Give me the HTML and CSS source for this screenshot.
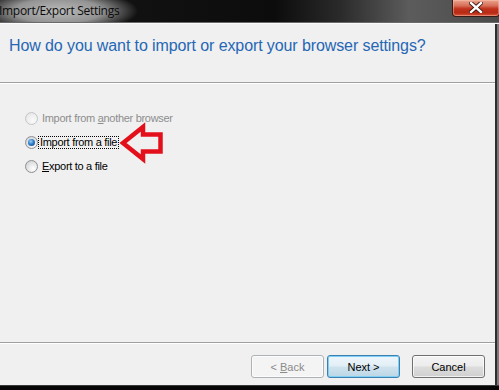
FILE: index.html
```html
<!DOCTYPE html>
<html>
<head>
<meta charset="utf-8">
<link rel="stylesheet" href="styles.css">
</head>
<body>
<div class="window">
  <div class="titlebar">
    <span class="title">Import/Export Settings</span>
    <span class="close">
      <svg width="14" height="11" viewBox="0 0 14 11">
        <path d="M2 1 L12 10 M12 1 L2 10" stroke="#3a1208" stroke-width="4.2" stroke-linecap="square"/>
        <path d="M2 1 L12 10 M12 1 L2 10" stroke="#ffffff" stroke-width="2.4" stroke-linecap="square"/>
      </svg>
    </span>
  </div>
  <div class="frame">
    <div class="main">
      <div class="header">
        <h1 class="heading">How do you want to import or export your browser settings?</h1>
      </div>
      <div class="body">
        <div class="option disabled">
          <span class="radio"></span>
          <span class="label">Import from <u>a</u>nother browser</span>
        </div>
        <div class="option">
          <span class="radio checked"></span>
          <span class="label focus">Import from a file</span>
          <svg class="arrow" width="48" height="42" viewBox="0 0 48 42">
            <path d="M5 21 L25 5 L25 12.5 L42.5 12.5 L42.5 29.5 L25 29.5 L25 37 Z" fill="none" stroke="#e3101c" stroke-width="4.5" stroke-linejoin="miter"/>
          </svg>
        </div>
        <div class="option">
          <span class="radio"></span>
          <span class="label"><u>E</u>xport to a file</span>
        </div>
      </div>
      <div class="footer">
        <button class="btn disabled">&lt; <u>B</u>ack</button>
        <button class="btn default">Next &gt;</button>
        <button class="btn cancel">Cancel</button>
      </div>
    </div>
  </div>
  <div class="bottomframe"></div>
</div>
</body>
</html>
```
FILE: styles.css
```css
html, body {
  margin: 0;
  padding: 0;
}
body {
  width: 499px;
  height: 390px;
  overflow: hidden;
  background: #f0f0f0;
  font-family: "Liberation Sans", Arial, sans-serif;
}
.window {
  display: flex;
  flex-direction: column;
  height: 390px;
}
.titlebar {
  height: 22px;
  display: flex;
  justify-content: space-between;
  align-items: flex-start;
  border-bottom: 1px solid #6a6a6a;
  box-shadow: 0 1px 0 #fbfbfb;
  margin-bottom: 1px;
  background:
    radial-gradient(ellipse 80px 22px at 58px 11px, rgba(195,195,195,0.95) 0%, rgba(165,165,165,0.88) 55%, rgba(60,60,60,0) 100%),
    linear-gradient(to right, #161616 0%, #0c0c0c 55%, #2a2a2a 68%, #5c5c5c 82%, #4a4a4a 100%);
}
.title {
  font-size: 12px;
  line-height: 12px;
  margin-top: 5px;
  margin-left: -1px;
  color: #0a0a0a;
  font-family: "Open Sans", "Liberation Sans", sans-serif;
  letter-spacing: -0.3px;
}
.close {
  width: 48px;
  height: 17px;
  margin-right: -1px;
  box-sizing: border-box;
  border: 1px solid #3a1a14;
  border-top: none;
  border-radius: 0 0 4px 4px;
  background: linear-gradient(to bottom, #e9a48f 0%, #d8705a 35%, #c0321c 55%, #b82a14 80%, #d8553a 100%);
  box-shadow: inset 0 0 0 1px rgba(255,200,180,0.45);
  display: flex;
  align-items: center;
  justify-content: center;
}
.close svg {
  display: block;
  margin-top: -1px;
}
.frame {
  flex: 1;
  display: flex;
  background: #7a7a7a;
}
.main {
  flex: 1;
  display: flex;
  flex-direction: column;
  background: #f0f0f0;
  margin-right: 2px;
  border-right: 2px solid #2e2e2e;
}
.header {
  height: 59px;
  border-bottom: 1px solid #a0a0a0;
  box-shadow: 0 1px 0 #ffffff;
  margin-bottom: 1px;
  padding-left: 9px;
  box-sizing: border-box;
}
.heading {
  margin: 0;
  padding-top: 12px;
  font-weight: normal;
  font-size: 16px;
  line-height: 20px;
  letter-spacing: -0.1px;
  color: #2567b5;
  font-family: "Liberation Sans", Arial, sans-serif;
}
.body {
  flex: 1;
  padding-top: 22px;
  padding-left: 25px;
  display: flex;
  flex-direction: column;
}
.option {
  position: relative;
  height: 24px;
  display: flex;
  align-items: center;
  gap: 2px;
  font-size: 11px;
  letter-spacing: -0.3px;
  color: #000;
}
.option.disabled {
  color: #8d8d8d;
}
.label {
  padding: 0 1px;
  line-height: 11px;
  border: 1px dotted transparent;
}
.label.focus {
  border-color: #000;
  margin-left: -2px;
  margin-right: -2px;
}
.radio {
  width: 13px;
  height: 13px;
  box-sizing: border-box;
  border-radius: 50%;
  border: 1px solid #8c8f94;
  background: radial-gradient(circle at 65% 70%, #ffffff 0%, #e8e8e8 45%, #c8cacd 100%);
  display: flex;
  align-items: center;
  justify-content: center;
}
.disabled .radio {
  border-color: #c4c6c8;
  background: radial-gradient(circle at 65% 70%, #fafafa 0%, #efefef 50%, #e0e0e0 100%);
}
.radio.checked::after {
  content: "";
  width: 7px;
  height: 7px;
  border-radius: 50%;
  background: radial-gradient(circle at 40% 35%, #9fd0f4 0%, #2f7fc8 45%, #163f7c 100%);
}
.arrow {
  position: absolute;
  left: 93px;
  top: -8px;
}
.footer {
  height: 43px;
  border-top: 1px solid #a0a0a0;
  box-shadow: inset 0 1px 0 #ffffff;
  margin-top: -2px;
  box-sizing: border-box;
  display: flex;
  justify-content: flex-end;
  align-items: flex-start;
  padding-top: 12px;
  padding-right: 10px;
  gap: 3px;
}
.btn {
  width: 73px;
  height: 23px;
  box-sizing: border-box;
  border: 1px solid #707070;
  border-radius: 3px;
  font-family: "Liberation Sans", Arial, sans-serif;
  font-size: 11px;
  color: #000;
  padding: 0;
  background: linear-gradient(to bottom, #f4f4f4 0%, #ececec 48%, #dddddd 52%, #cfcfcf 100%);
  box-shadow: inset 0 0 0 1px rgba(255,255,255,0.7);
}
.btn.disabled {
  color: #8a8a8a;
  border-color: #adb2b5;
  background: #f4f4f4;
}
.btn.default {
  border-color: #3c7fb1;
  box-shadow: inset 0 0 0 1px #7dd0f4;
  background: linear-gradient(to bottom, #eef6fb 0%, #e2eef6 48%, #cfe3ee 52%, #bcd6e6 100%);
}
.btn.cancel {
  margin-left: 9px;
}
.bottomframe {
  height: 5px;
  border-top: 1px solid #3a3a3a;
  box-sizing: border-box;
  background: #050505;
}
```
